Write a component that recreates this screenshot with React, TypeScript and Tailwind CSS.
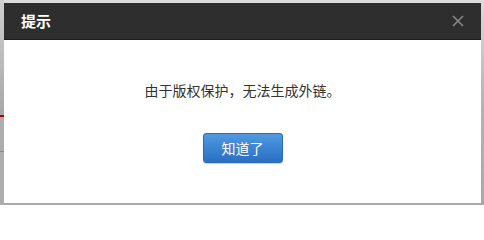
const FONT = { fontFamily: '"Noto Sans CJK SC", "Liberation Sans", sans-serif' };

function LeftStrip() {
  return (
    <div className="flex w-[4px] flex-col bg-[#adadad]">
      <div className="h-[115px] bg-gradient-to-b from-[#d0d0d0] to-[#a8a8a8]" />
      <div className="h-[2px] bg-[#b00000]" />
      <div className="h-[34px]" />
      <div className="h-[1px] bg-[#888]" />
      <div className="flex-1" />
    </div>
  );
}

function CloseIcon() {
  return (
    <svg width="12" height="12" viewBox="0 0 12 12" className="mr-[17px]">
      <path d="M1 1L11 11M11 1L1 11" stroke="#8a8a8a" strokeWidth="1.5" />
    </svg>
  );
}

export default function App() {
  return (
    <div className="flex h-[205px] w-[484px] bg-[#b0b0b0]" style={FONT}>
      <LeftStrip />
      <div className="flex flex-1 flex-col pt-[3px] pr-[3px] pb-[2px] bg-gradient-to-b from-[#dcdcdc] via-[#b4b4b4] to-[#a8a8a8]">
        <div className="flex flex-1 flex-col bg-white">
          <div className="flex h-[37px] items-center justify-between border-b border-[#1c1c1c] bg-[#2e2e2e] pl-[17px]">
            <span className="text-[15px] font-bold text-white">提示</span>
            <CloseIcon />
          </div>
          <div className="flex flex-1 flex-col items-center pt-[40px]">
            <p className="text-[14px] leading-[20px] text-[#333]">由于版权保护，无法生成外链。</p>
            <button className="mt-[33px] h-[30px] w-[80px] rounded-[3px] border border-[#2c6bb5] bg-gradient-to-b from-[#4f9ae3] to-[#2a6fc2] text-[14px] text-white shadow-[0_1px_1px_rgba(0,0,0,0.2)]">
              知道了
            </button>
          </div>
        </div>
      </div>
    </div>
  );
}
